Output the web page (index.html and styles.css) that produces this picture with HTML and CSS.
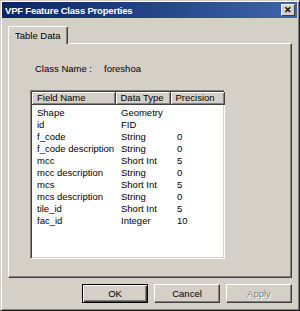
FILE: index.html
```html
<!DOCTYPE html>
<html lang="en">
<head>
  <meta charset="UTF-8">
  <title>VPF Feature Class Properties</title>
  <link rel="stylesheet" href="styles.css">
</head>
<body>
  <div class="window">
    <div class="titlebar">
      <span class="title">VPF Feature Class Properties</span>
      <button class="close">&#x2715;</button>
    </div>

    <div class="content">
      <div class="tabs">
        <div class="tab">Table Data</div>
      </div>

      <div class="panel">
        <div class="class-row">
          <span class="label">Class Name :</span>
          <span>foreshoa</span>
        </div>

        <div class="listbox">
          <table class="fields">
            <thead>
              <tr>
                <th class="col-name">Field Name</th>
                <th class="col-type">Data Type</th>
                <th class="col-prec">Precision</th>
              </tr>
            </thead>
            <tbody>
              <tr><td>Shape</td><td>Geometry</td><td></td></tr>
              <tr><td>id</td><td>FID</td><td></td></tr>
              <tr><td>f_code</td><td>String</td><td>0</td></tr>
              <tr><td>f_code description</td><td>String</td><td>0</td></tr>
              <tr><td>mcc</td><td>Short Int</td><td>5</td></tr>
              <tr><td>mcc description</td><td>String</td><td>0</td></tr>
              <tr><td>mcs</td><td>Short Int</td><td>5</td></tr>
              <tr><td>mcs description</td><td>String</td><td>0</td></tr>
              <tr><td>tile_id</td><td>Short Int</td><td>5</td></tr>
              <tr><td>fac_id</td><td>Integer</td><td>10</td></tr>
            </tbody>
          </table>
        </div>
      </div>

      <div class="buttons">
        <button class="btn default">OK</button>
        <button class="btn">Cancel</button>
        <button class="btn disabled">Apply</button>
      </div>
    </div>
  </div>
</body>
</html>
```

FILE: styles.css
```css
body {
  margin: 0;
  font-family: "Liberation Sans", Arial, sans-serif;
  font-size: 9.5px;
  color: #000;
  background: #d4d0c8;
}

/* Outer dialog frame */
.window {
  width: 300px;
  height: 311px;
  box-sizing: border-box;
  background: #d4d0c8;
  border: 1px solid;
  border-color: #d4d0c8 #202020 #202020 #d4d0c8;
  box-shadow: inset 1px 1px 0 #ffffff, inset -1px -1px 0 #808080;
  padding: 1px 2px 2px 1px;
}

.titlebar {
  height: 16px;
  display: flex;
  align-items: center;
  justify-content: space-between;
  padding: 0 2px 0 3px;
  background: linear-gradient(to right, #0a246a, #2a4a8e 60%, #3e64aa);
}

.title {
  color: #ffffff;
  font-weight: bold;
  font-size: 9.5px;
  letter-spacing: -0.2px;
}

.close {
  width: 14px;
  height: 12px;
  padding: 0;
  background: #d4d0c8;
  border: 1px solid;
  border-color: #ffffff #404040 #404040 #ffffff;
  font-size: 9px;
  font-weight: bold;
  line-height: 10px;
  color: #000;
}

.content {
  padding: 8px 5px 0 6px;
}

/* Tab strip */
.tabs {
  display: flex;
  height: 17px;
}

.tab {
  width: 60px;
  box-sizing: border-box;
  border: 1px solid;
  border-bottom: none;
  border-color: #ffffff #404040 #ffffff #ffffff;
  border-radius: 2px 2px 0 0;
  box-shadow: inset -1px 0 0 #808080;
  padding: 3px 0 0 6px;
  position: relative;
  z-index: 1;
  background: #d4d0c8;
  height: 18px;
}

.panel {
  height: 235px;
  box-sizing: border-box;
  border: 1px solid;
  border-color: #ffffff #404040 #404040 #ffffff;
  box-shadow: inset -1px -1px 0 #808080;
  padding: 17px 0 0 21px;
}

.class-row {
  display: flex;
  padding-left: 5px;
  height: 14px;
  align-items: center;
}

.label {
  width: 69px;
}

/* Field list */
.listbox {
  margin-top: 15px;
  width: 195px;
  height: 169px;
  box-sizing: border-box;
  background: #ffffff;
  border: 1px solid;
  border-color: #808080 #ffffff #ffffff #808080;
  box-shadow: inset 1px 1px 0 #404040, inset -1px -1px 0 #d4d0c8;
  padding: 1px;
}

.fields {
  border-collapse: collapse;
  table-layout: fixed;
  width: 192px;
}

.fields th {
  height: 12px;
  box-sizing: border-box;
  padding: 0 0 0 5px;
  background: #d4d0c8;
  font-weight: normal;
  text-align: left;
  border-right: 1px solid #404040;
  border-bottom: 1px solid #404040;
  box-shadow: inset 1px 1px 0 #ffffff, inset -1px -1px 0 #808080;
  line-height: 10px;
}

.col-name { width: 83px; }
.col-type { width: 55px; }
.col-prec { width: 54px; }

.fields td {
  height: 12px;
  padding: 0 0 0 5px;
  line-height: 12px;
  white-space: nowrap;
}

.fields td:nth-child(2) { padding-left: 6px; }
.fields td:nth-child(3) { padding-left: 7px; }

.fields tbody tr:first-child td {
  padding-top: 2px;
}

/* Dialog buttons */
.buttons {
  display: flex;
  justify-content: flex-end;
  gap: 6px;
  margin-top: 6px;
}

.btn {
  width: 66px;
  height: 19px;
  padding: 0;
  font-family: "Liberation Sans", Arial, sans-serif;
  font-size: 9.5px;
  background: #d4d0c8;
  color: #000;
  border: 1px solid;
  border-color: #ffffff #404040 #404040 #ffffff;
  box-shadow: inset -1px -1px 0 #808080;
}

.btn.default {
  border: 1px solid #000;
  box-shadow: inset 1px 1px 0 #ffffff, inset -1px -1px 0 #404040, inset -2px -2px 0 #808080;
}

.btn.disabled {
  color: #808080;
  text-shadow: 1px 1px 0 #ffffff;
}
```
